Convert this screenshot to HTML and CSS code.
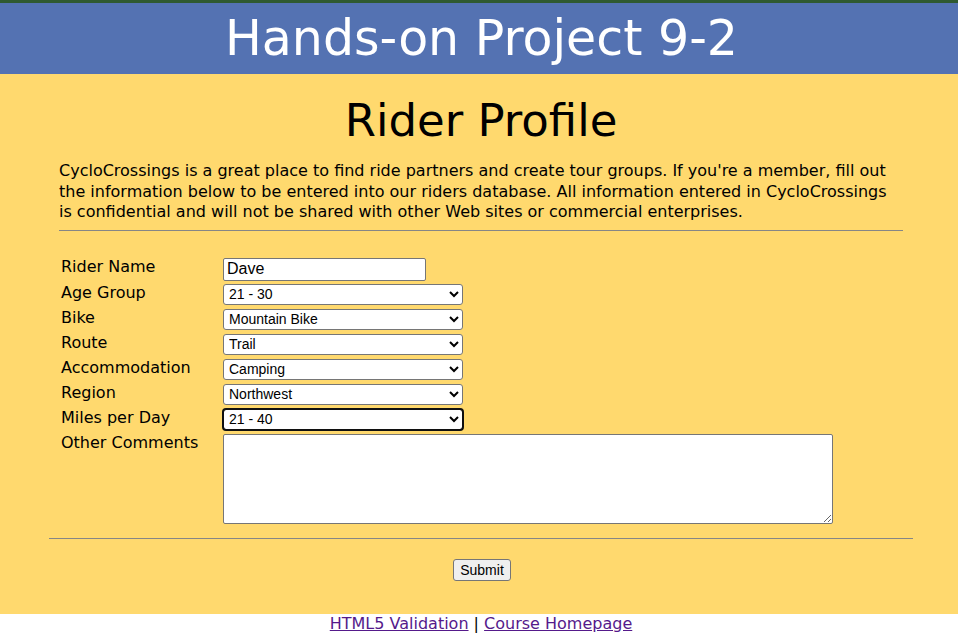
FILE: index.html
```html
<!DOCTYPE html>
<html lang="en">
<head>
<meta charset="utf-8">
<title>Hands-on Project 9-2</title>
<link rel="stylesheet" href="styles.css">
</head>
<body>
<header class="banner">
  <h1 class="banner-title">Hands-on Project 9-2</h1>
</header>
<main class="content">
  <h2 class="page-title">Rider Profile</h2>
  <p class="intro">CycloCrossings is a great place to find ride partners and create tour groups. If you're a member, fill out the information below to be entered into our riders database. All information entered in CycloCrossings is confidential and will not be shared with other Web sites or commercial enterprises.</p>
  <hr class="rule rule-top">
  <form class="profile-form">
    <div class="fields">
      <label class="field-label" for="name">Rider Name</label>
      <div class="field"><input class="text-input" id="name" type="text" value="Dave"></div>
      <label class="field-label" for="age">Age Group</label>
      <div class="field"><select class="select" id="age"><option>21 - 30</option></select></div>
      <label class="field-label" for="bike">Bike</label>
      <div class="field"><select class="select" id="bike"><option>Mountain Bike</option></select></div>
      <label class="field-label" for="route">Route</label>
      <div class="field"><select class="select" id="route"><option>Trail</option></select></div>
      <label class="field-label" for="accom">Accommodation</label>
      <div class="field"><select class="select" id="accom"><option>Camping</option></select></div>
      <label class="field-label" for="region">Region</label>
      <div class="field"><select class="select" id="region"><option>Northwest</option></select></div>
      <label class="field-label" for="miles">Miles per Day</label>
      <div class="field"><select class="select select-focus" id="miles"><option>21 - 40</option></select></div>
      <label class="field-label" for="comments">Other Comments</label>
      <div class="field"><textarea class="comments" id="comments"></textarea></div>
    </div>
    <hr class="rule rule-bottom">
    <div class="submit-row"><button class="submit" type="button">Submit</button></div>
  </form>
</main>
<footer class="footer">
  <a class="footer-link" href="#">HTML5 Validation</a> | <a class="footer-link" href="#">Course Homepage</a>
</footer>
</body>
</html>
```
FILE: styles.css
```css
html, body {
  margin: 0;
  padding: 0;
  background: #ffffff;
}
body {
  font-family: "DejaVu Sans", Verdana, sans-serif;
  font-size: 16px;
  color: #000;
}
.banner {
  background: #5472b2;
  border-top: 3px solid #2f5a30;
  height: 71px;
  display: flex;
  align-items: center;
  justify-content: center;
  padding-left: 5px;
}
.banner-title {
  margin: 0;
  font-weight: normal;
  font-size: 49px;
  color: #ffffff;
  line-height: 1;
}
.content {
  background: #ffd96e;
  padding: 20px 45px 33px 49px;
}
.page-title {
  margin: 0;
  text-align: center;
  font-weight: normal;
  font-size: 45px;
  line-height: 54px;
}
.intro {
  margin: 13px 10px 0 10px;
  line-height: 20.5px;
}
.rule {
  border: 0;
  height: 1px;
  background: #868686;
  margin: 0;
}
.rule-top {
  margin: 7px 10px 0 10px;
}
.fields {
  display: grid;
  grid-template-columns: 162px 1fr;
  row-gap: 4px;
  margin: 27px 12px 0 12px;
  align-items: start;
}
.field-label {
  line-height: 18px;
  padding-top: 0;
}
.field {
  display: flex;
}
.text-input {
  width: 203px;
  height: 23px;
  box-sizing: border-box;
  font-family: Arial, "Liberation Sans", sans-serif;
  font-size: 16px;
  padding: 1px 3px;
  border: 1px solid #767676;
  border-radius: 2px;
  margin: 0 0 -1px 0;
}
.select {
  width: 240px;
  height: 21px;
  box-sizing: border-box;
  font-family: Arial, "Liberation Sans", sans-serif;
  font-size: 14px;
  border: 1px solid #767676;
  border-radius: 3px;
  background: #fff;
  color: #000;
  padding: 0 0 0 1px;
}
.select-focus {
  outline: 2px solid #101010;
  outline-offset: -1px;
}
.comments {
  width: 610px;
  height: 90px;
  box-sizing: border-box;
  border: 1px solid #767676;
  border-radius: 2px;
  font-family: "Liberation Mono", monospace;
  font-size: 13.33px;
}
.rule-bottom {
  margin: 14px 0 0 0;
}
.submit-row {
  display: flex;
  justify-content: center;
  padding-top: 20px;
  padding-left: 2px;
}
.submit {
  font-family: Arial, "Liberation Sans", sans-serif;
  font-size: 14px;
  height: 22px;
  padding: 1px 6px;
  border: 1px solid #767676;
  border-radius: 3px;
  background: #efefef;
  color: #000;
}
.footer {
  text-align: center;
  padding-left: 4px;
  line-height: 19px;
  padding-top: 0;
  color: #000;
}
.footer-link {
  color: #551a8b;
}
```
